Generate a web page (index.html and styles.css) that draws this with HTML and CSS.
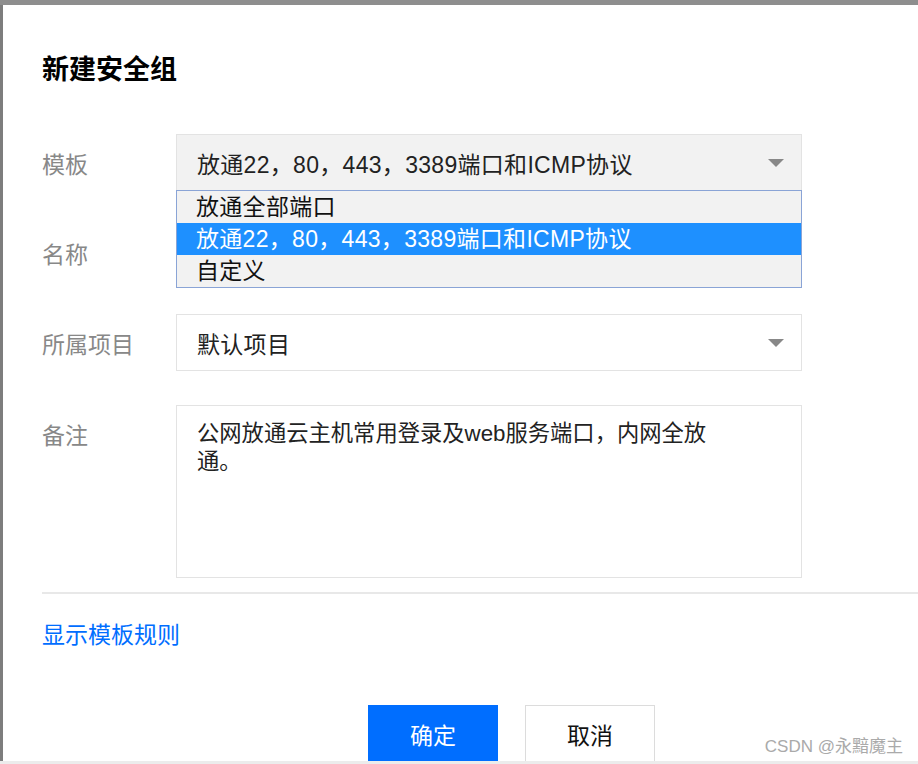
FILE: index.html
```html
<!DOCTYPE html>
<html lang="zh-CN">

<head>
    <meta charset="UTF-8">
    <title>新建安全组</title>
    <link rel="stylesheet" href="styles.css">
</head>

<body>
    <div class="backdrop-strip"></div>
    <div class="dialog">
        <h2 class="dialog-title">新建安全组</h2>

        <div class="form">
            <div class="form-label">模板</div>
            <div class="select-wrap">
                <div class="select select-open">
                    <span>放通22，80，443，3389端口和ICMP协议</span>
                    <svg class="arrow" width="16" height="8" viewBox="0 0 16 8"><path d="M0 0h16L8 8z" fill="#888"/></svg>
                </div>
                <ul class="dropdown">
                    <li>放通全部端口</li>
                    <li class="active">放通22，80，443，3389端口和ICMP协议</li>
                    <li>自定义</li>
                </ul>
            </div>

            <div class="form-label">名称</div>
            <input class="input" type="text">

            <div class="form-label">所属项目</div>
            <div class="select">
                <span>默认项目</span>
                <svg class="arrow" width="16" height="8" viewBox="0 0 16 8"><path d="M0 0h16L8 8z" fill="#888"/></svg>
            </div>

            <div class="form-label label-top">备注</div>
            <textarea class="textarea">公网放通云主机常用登录及web服务端口，内网全放
通。</textarea>
        </div>

        <div class="divider"></div>

        <a href="#" class="rule-link">显示模板规则</a>

        <div class="footer">
            <button class="btn btn-primary">确定</button>
            <button class="btn">取消</button>
        </div>

        <div class="watermark">CSDN @永黯魔主</div>
    </div>
    <div class="bottom-strip"></div>
</body>

</html>
```

FILE: styles.css
```css
body {
    margin: 0;
    height: 764px;
    overflow: hidden;
    font-family: "Liberation Sans", "Noto Sans CJK SC", sans-serif;
    background: #fff;
}

.backdrop-strip {
    height: 5px;
    background: #8e8e8e;
}

.bottom-strip {
    height: 3px;
    background: #ececec;
}

.dialog {
    position: relative;
    height: 756px;
    box-sizing: border-box;
    border-left: 3px solid #7d7d7d;
    padding: 47px 0 0 39px;
    overflow: hidden;
}

.dialog-title {
    margin: 0;
    font-size: 27px;
    line-height: 32px;
    font-weight: bold;
    color: #000;
    font-family: "Noto Sans CJK SC", sans-serif;
}

.form {
    display: grid;
    grid-template-columns: 134px 626px;
    grid-template-rows: 57px 57px 57px 174px;
    row-gap: 33px;
    margin-top: 50px;
    font-size: 23px;
}

.form-label {
    color: #888;
    display: flex;
    align-items: center;
    font-family: "Noto Sans CJK SC", sans-serif;
}

.label-top {
    align-items: flex-start;
    padding-top: 16px;
    line-height: 28px;
}

.select-wrap {
    position: relative;
    z-index: 2;
}

.select {
    box-sizing: border-box;
    border: 1px solid #e3e3e3;
    background: #fff;
    display: flex;
    align-items: center;
    justify-content: space-between;
    padding: 0 17px 0 20px;
    color: #222;
    letter-spacing: 0.3px;
}

.select-open {
    height: 57px;
    background: #f2f2f2;
}

.arrow {
    flex-shrink: 0;
}

.dropdown {
    position: absolute;
    left: 0;
    right: 0;
    top: 56px;
    margin: 0;
    padding: 0;
    list-style: none;
    background: #f2f2f2;
    border: 1px solid #8aa4d6;
    color: #111;
    letter-spacing: 0.3px;
}

.dropdown li {
    height: 32px;
    line-height: 32px;
    padding-left: 19px;
}

.dropdown li.active {
    background: #1e90ff;
    color: #fff;
}

.input {
    box-sizing: border-box;
    border: 1px solid #e3e3e3;
    margin: 0;
}

.textarea {
    box-sizing: border-box;
    margin-top: 1px;
    border: 1px solid #e3e3e3;
    padding: 14px 20px 0 20px;
    font-family: "Liberation Sans", "Noto Sans CJK SC", sans-serif;
    font-size: 22.3px;
    line-height: 28px;
    color: #222;
    resize: none;
    white-space: pre;
    overflow: hidden;
}

.divider {
    height: 2px;
    background: #e8e8e8;
    margin-top: 14px;
}

.rule-link {
    display: inline-block;
    margin-top: 25px;
    font-size: 23px;
    line-height: 28px;
    color: #006eff;
    text-decoration: none;
    font-family: "Noto Sans CJK SC", sans-serif;
}

.footer {
    display: flex;
    gap: 27px;
    margin-top: 58px;
    padding-left: 326px;
}

.btn {
    width: 130px;
    height: 58px;
    border: 1px solid #dcdcdc;
    background: #fff;
    color: #111;
    font-size: 23px;
    font-family: "Noto Sans CJK SC", sans-serif;
    padding: 0;
}

.btn-primary {
    background: #006eff;
    border-color: #006eff;
    color: #fff;
}

.watermark {
    position: absolute;
    right: 15px;
    bottom: 4px;
    font-size: 17px;
    color: #aaa;
    font-family: "Liberation Sans", "Noto Sans CJK SC", sans-serif;
}
```
